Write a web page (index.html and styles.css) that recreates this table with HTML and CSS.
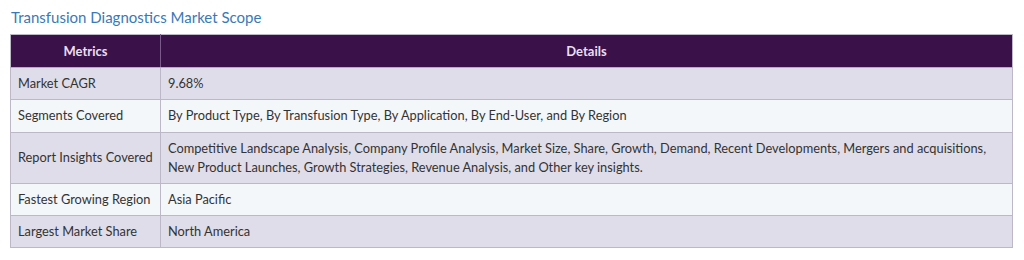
FILE: index.html
```html
<!DOCTYPE html>
<html lang="en">
<head>
<meta charset="utf-8">
<title>Transfusion Diagnostics Market Scope</title>
<link rel="stylesheet" href="styles.css">
</head>
<body>
<div class="page">
  <h2 class="title">Transfusion Diagnostics Market Scope</h2>
  <table class="scope">
    <thead>
      <tr><th class="col-metric">Metrics</th><th>Details</th></tr>
    </thead>
    <tbody>
      <tr><td class="metric">Market CAGR</td><td>9.68%</td></tr>
      <tr><td class="metric">Segments Covered</td><td>By Product Type, By Transfusion Type, By Application, By End-User, and By Region</td></tr>
      <tr><td class="metric">Report Insights Covered</td><td>Competitive Landscape Analysis, Company Profile Analysis, Market Size, Share, Growth, Demand, Recent Developments, Mergers and acquisitions, New Product Launches, Growth Strategies, Revenue Analysis, and Other key insights.</td></tr>
      <tr><td class="metric">Fastest Growing Region</td><td>Asia Pacific</td></tr>
      <tr><td class="metric">Largest Market Share</td><td>North America</td></tr>
    </tbody>
  </table>
</div>
</body>
</html>
```

FILE: styles.css
```css
html, body {
  margin: 0;
  padding: 0;
  background: #ffffff;
}
.page {
  padding: 8px 11px 0 10px;
  font-family: Lato, "Open Sans", "Liberation Sans", sans-serif;
}
.title {
  margin: 0 0 8px 1px;
  font-size: 15px;
  font-weight: 400;
  line-height: 18px;
  color: #3a79b6;
}
.scope {
  width: 1003px;
  border-collapse: collapse;
  font-size: 12.8px;
  color: #333333;
  border: 1px solid #bcb8c8;
}
.scope th {
  background: #3a1149;
  color: #eadff0;
  font-weight: 700;
  font-size: 13px;
  text-align: center;
  height: 33px;
  padding: 0 7px;
  box-sizing: border-box;
  border-left: 1px solid #7a5a8a;
  border-bottom: 1px solid #b9a6c8;
}
.scope th:first-child { border-left: none; }
.scope .col-metric { width: 150px; }
.scope td {
  padding: 6px 7px 6.3px;
  line-height: 19px;
  text-align: left;
  vertical-align: middle;
  border: 1px solid #bcb8c8;
}
.scope td.metric { white-space: nowrap; }
.scope tbody tr:nth-child(odd) td { background: #dfdde9; }
.scope tbody tr:nth-child(even) td { background: #f3f7fa; }
```
